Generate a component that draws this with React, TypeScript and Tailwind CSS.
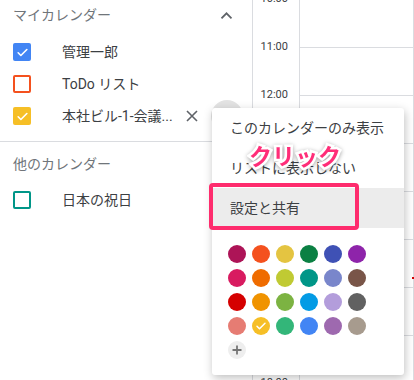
import React from "react";

const FONT = 'Roboto, "Noto Sans CJK JP", "Noto Sans", sans-serif';

function Check({ size = 12 }: { size?: number }) {
  return (
    <svg width={size} height={size} viewBox="0 0 24 24" fill="none">
      <path d="M4 12.5l5 5L20 6.5" stroke="white" strokeWidth="3" strokeLinecap="round" strokeLinejoin="round" />
    </svg>
  );
}

function Box({ color, checked }: { color: string; checked: boolean }) {
  return checked ? (
    <div className="w-[18px] h-[18px] rounded-[2px] flex items-center justify-center shrink-0" style={{ background: color }}>
      <Check size={13} />
    </div>
  ) : (
    <div className="w-[18px] h-[18px] rounded-[2px] border-2 shrink-0" style={{ borderColor: color }} />
  );
}

function Row({ color, checked, label, extra }: { color: string; checked: boolean; label: string; extra?: React.ReactNode }) {
  return (
    <div className="h-[32px] flex items-center pl-[13px]">
      <Box color={color} checked={checked} />
      <span className="ml-[31px] text-[14px] text-[#3c4043] whitespace-nowrap">{label}</span>
      {extra}
    </div>
  );
}

const COLORS = [
  ["#ad1457", "#f4511e", "#e4c441", "#0b8043", "#3f51b5", "#8e24aa"],
  ["#d81b60", "#ef6c00", "#c0ca33", "#009688", "#7986cb", "#795548"],
  ["#d50000", "#f09300", "#7cb342", "#039be5", "#b39ddb", "#616161"],
  ["#e67c73", "#f6bf26", "#33b679", "#4285f4", "#9e69af", "#a79b8e"],
];

const TIMES = ["10:00", "11:00", "12:00", "13:00", "14:00", "15:00", "16:00", "17:00", "18:00"];

export default function App() {
  return (
    <div className="relative w-[414px] h-[380px] overflow-hidden bg-white flex" style={{ fontFamily: FONT }}>
      {/* Left panel */}
      <div className="w-[253px] shrink-0 border-r border-[#dadce0] flex flex-col">
        <div className="h-[30px] flex items-center justify-between pl-[13px] pr-[18px]">
          <span className="text-[14px] text-[#70757a]">マイカレンダー</span>
          <svg width="15" height="15" viewBox="0 0 24 24" fill="none">
            <path d="M5 15.5l7-7 7 7" stroke="#5f6368" strokeWidth="2.8" strokeLinecap="square" />
          </svg>
        </div>
        <div className="mt-[6px] flex flex-col">
          <Row color="#4285f4" checked label="管理一郎" />
          <Row color="#f4511e" checked={false} label="ToDo リスト" />
          <Row
            color="#f6bf26"
            checked
            label="本社ビル-1-会議..."
            extra={
              <div className="relative ml-auto flex items-center">
                <svg width="12" height="12" viewBox="0 0 12 12" className="mr-[13px]">
                  <path d="M1 1l10 10M11 1L1 11" stroke="#5f6368" strokeWidth="1.6" />
                </svg>
                <div className="w-[32px] h-[32px] rounded-full bg-[#e3e3e3] mr-[9px]" />
              </div>
            }
          />
        </div>
        <div className="mt-[9px] border-t border-[#dadce0]" />
        <div className="pt-[10px] flex flex-col">
          <div className="h-[24px] flex items-center pl-[13px]">
            <span className="text-[14px] text-[#70757a]">他のカレンダー</span>
          </div>
          <div className="mt-[8px]">
            <Row color="#009688" checked={false} label="日本の祝日" />
          </div>
        </div>
      </div>

      {/* Time column */}
      <div className="w-[47px] shrink-0 border-r border-[#dadce0] flex flex-col mt-[-25px]">
        {TIMES.map((t) => (
          <div key={t} className="h-[48px] shrink-0 flex items-center justify-end pr-[11px] text-[11px] text-[#3c4043]">
            {t}
          </div>
        ))}
      </div>

      {/* Grid */}
      <div className="flex-1 border-r border-[#dadce0] flex flex-col">
        <div className="h-[47px] shrink-0" />
        {TIMES.slice(1).map((t) => (
          <div key={t} className="h-[48px] shrink-0 border-t border-[#dadce0]" />
        ))}
      </div>
      <div className="absolute left-[412px] top-[277px] w-[2px] h-[2px] bg-[#d50000]" />

      {/* Menu */}
      <div className="absolute left-[212px] top-[108px] w-[192px] h-[267px] bg-white rounded-[3px] shadow-[1px_3px_10px_rgba(0,0,0,0.25)] flex flex-col">
        <div className="h-[40px] flex items-center pl-[18px] text-[14px] text-[#3c4043] whitespace-nowrap">このカレンダーのみ表示</div>
        <div className="h-[40px] flex items-center pl-[18px] text-[14px] text-[#3c4043] whitespace-nowrap">リストに表示しない</div>
        <div className="h-[40px] flex items-center pl-[18px] text-[14px] text-[#3c4043] bg-[#ececec] whitespace-nowrap">設定と共有</div>
        <div className="pt-[17px] pl-[16px] flex flex-col gap-[6px]">
          {COLORS.map((row, i) => (
            <div key={i} className="flex gap-[6px]">
              {row.map((c) => (
                <div key={c} className="w-[18px] h-[18px] rounded-full flex items-center justify-center" style={{ background: c }}>
                  {c === "#f6bf26" && <Check size={12} />}
                </div>
              ))}
            </div>
          ))}
          <div className="w-[18px] h-[18px] rounded-full bg-[#eeeeee] flex items-center justify-center">
            <svg width="10" height="10" viewBox="0 0 10 10">
              <path d="M5 0.5v9M0.5 5h9" stroke="#757575" strokeWidth="1.8" />
            </svg>
          </div>
        </div>
      </div>

      {/* Annotation box */}
      <div className="absolute left-[209px] top-[183px] w-[150px] h-[47px] border-4 border-[#fe2c6d] rounded-[4px]" />

      {/* Annotation text */}
      <div
        className="absolute left-[249px] top-[144px] text-[23px] font-bold text-[#ff2d78] leading-none [-webkit-text-stroke:5px_white] [paint-order:stroke_fill] drop-shadow-[0_1px_2px_rgba(0,0,0,0.35)]"
        style={{ fontFamily: '"Noto Sans CJK JP", sans-serif' }}
      >
        クリック
      </div>
    </div>
  );
}
